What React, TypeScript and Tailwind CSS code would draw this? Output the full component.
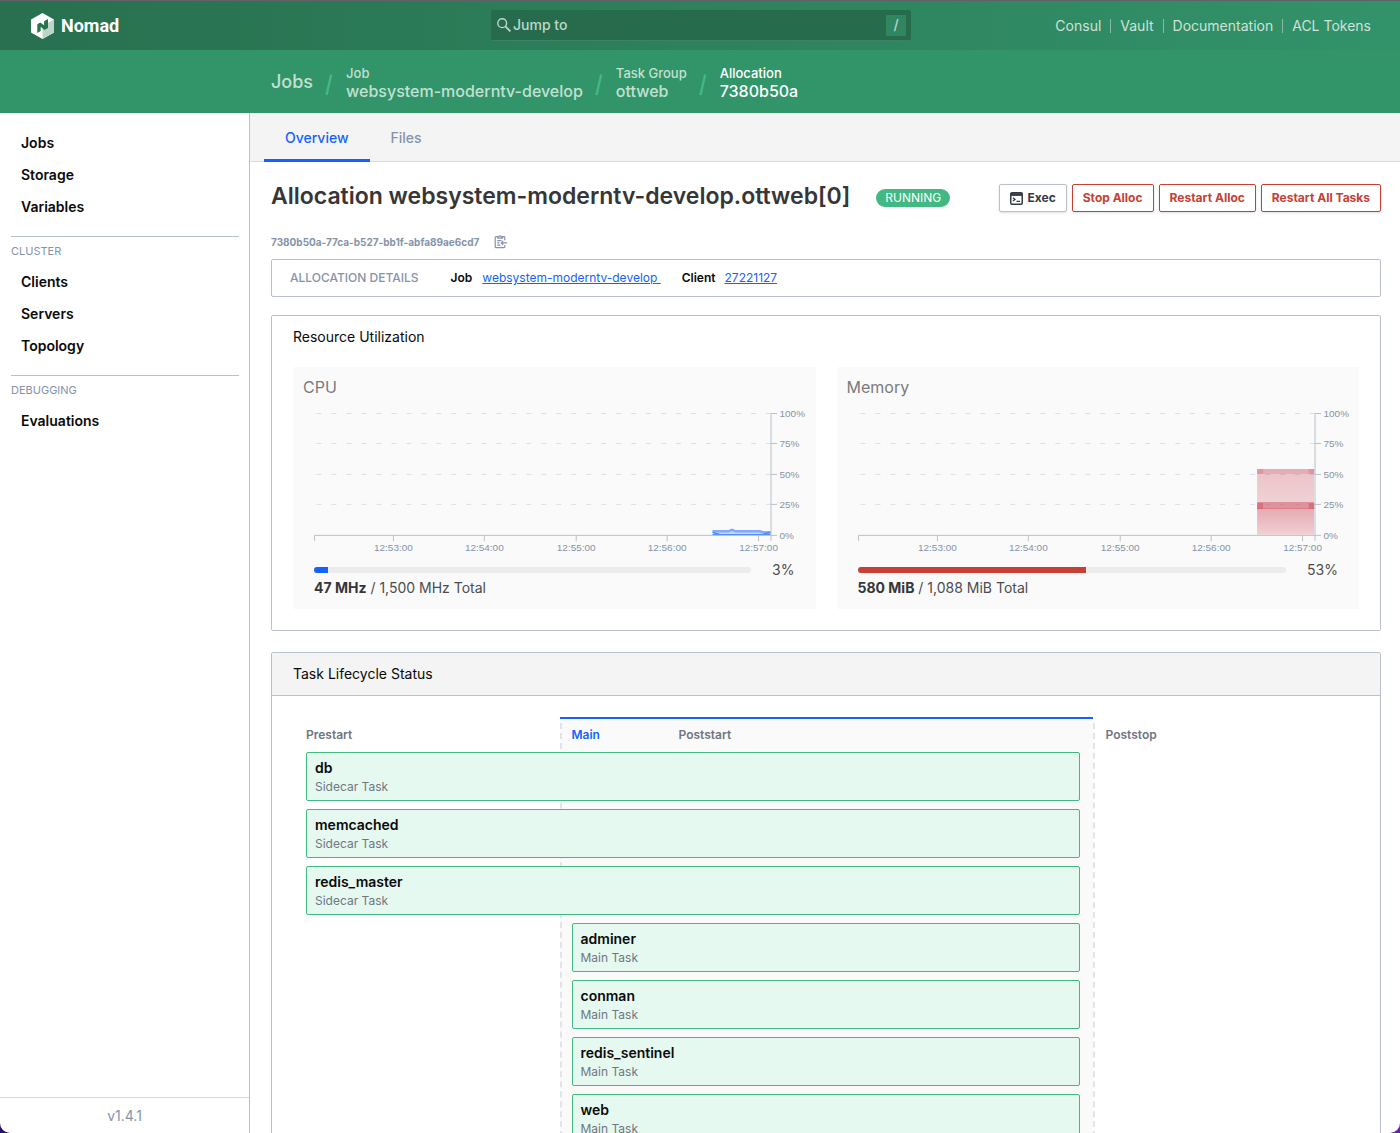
import React from 'react';

const navLinks = ['Consul', 'Vault', 'Documentation', 'ACL Tokens'];

const crumbs = [
  { label: 'Job', value: 'websystem-moderntv-develop' },
  { label: 'Task Group', value: 'ottweb' },
  { label: 'Allocation', value: '7380b50a', current: true },
];

const menu = [
  { title: '', items: ['Jobs', 'Storage', 'Variables'] },
  { title: 'Cluster', items: ['Clients', 'Servers', 'Topology'] },
  { title: 'Debugging', items: ['Evaluations'] },
];

const tasks = [
  { name: 'db', sidecar: true },
  { name: 'memcached', sidecar: true },
  { name: 'redis_master', sidecar: true },
  { name: 'adminer', sidecar: false },
  { name: 'conman', sidecar: false },
  { name: 'redis_sentinel', sidecar: false },
  { name: 'web', sidecar: false },
];

const yTicks = [
  { y: 13.5, label: '100%' },
  { y: 43.5, label: '75%' },
  { y: 74.5, label: '50%' },
  { y: 104.5, label: '25%' },
  { y: 135.5, label: '0%' },
];

const xTicks = [
  { x: 90.5, label: '12:53:00' },
  { x: 181.5, label: '12:54:00' },
  { x: 273.5, label: '12:55:00' },
  { x: 364.5, label: '12:56:00' },
  { x: 456, label: '12:57:00' },
];

function NomadMark() {
  return (
    <svg width="23" height="26" viewBox="0 0 23 26" aria-hidden="true">
      <path d="M11.5 0 23 6.5v13L11.5 26 0 19.5v-13z" fill="#fff" />
      <path d="M23 6.5v13L11.5 26V13z" fill="#bdd5c9" />
      <path d="M6.3 11.2 9.2 9.6l3.9 2.6V8.2L17 6v9l-3.6 2.1-3.7-3.3v4.1l-3.4 2z" fill="#28734f" />
    </svg>
  );
}

function Slash() {
  return (
    <svg width="8" height="22" viewBox="0 0 8 22" className="shrink-0" aria-hidden="true">
      <path d="M6.2.5 1.5 21" stroke="#42b883" strokeWidth="2.4" />
    </svg>
  );
}

function Header() {
  return (
    <header className="shrink-0 text-white">
      <div className="grid h-[50px] grid-cols-[1fr_420px_1fr] items-center border-t border-[#5f6368] bg-linear-to-r from-[#28704f] to-[#32936a] pr-[29px] pl-[31px]">
        <a href="#" className="flex items-center gap-[7px] font-['Roboto',sans-serif] text-lg font-bold">
          <NomadMark />
          Nomad
        </a>
        <button className="flex h-[31px] items-center rounded-xs border-b border-[#3b8462] bg-[#266c4c] pr-[5px] pl-1.5 text-sm font-medium text-[#bdd8cb]">
          <svg width="14" height="14" viewBox="0 0 14 14" fill="none" stroke="currentColor" strokeWidth="1.4" className="mr-0.5" aria-hidden="true">
            <circle cx="5.2" cy="5.2" r="4.4" />
            <path d="m8.4 8.4 5 5" strokeWidth="1.8" />
          </svg>
          Jump to
          <kbd className="ml-auto flex h-[21px] w-5 items-center justify-center bg-[#2f8660] font-['Inter',sans-serif]">/</kbd>
        </button>
        <nav className="flex items-center justify-end text-sm text-[#cce3d8]">
          {navLinks.map((link, i) => (
            <a
              key={link}
              href="#"
              className={i === 0 ? 'leading-[14px]' : 'ml-[9px] border-l border-[#84bda4] pl-[9px] leading-[14px]'}
            >
              {link}
            </a>
          ))}
        </nav>
      </div>
      <nav className="flex h-[63px] items-center bg-[#329469] pl-[271px] text-[#c3e0d3]" aria-label="Breadcrumb">
        <a href="#" className="text-lg font-medium">Jobs</a>
        {crumbs.map((crumb) => (
          <React.Fragment key={crumb.label}>
            <div className="mr-[13px] ml-3 pt-1.5">
              <Slash />
            </div>
            <a href="#" className={crumb.current ? 'pt-0.5 font-medium text-white' : 'pt-0.5 font-medium'}>
              <div className="text-[13px] leading-[17px]">{crumb.label}</div>
              <div className="text-base leading-[18px]">{crumb.value}</div>
            </a>
          </React.Fragment>
        ))}
      </nav>
    </header>
  );
}

function Sidebar() {
  return (
    <aside className="flex w-[250px] shrink-0 flex-col border-r border-[#bac1cc]">
      <div className="flex-1 pt-[14px] pr-2.5 pl-[11px]">
        {menu.map((group) => (
          <div key={group.items[0]} className="mb-[13px]">
            {group.title && (
              <p className="border-t border-[#bac1cc] pt-1.5 pb-[7px] text-[11px] leading-4 text-[#8693a9] uppercase">
                {group.title}
              </p>
            )}
            <ul>
              {group.items.map((item) => (
                <li key={item}>
                  <a href="#" className="flex h-8 items-center px-2.5 text-sm font-semibold text-[#0a0a0a]">
                    {item}
                  </a>
                </li>
              ))}
            </ul>
          </div>
        ))}
      </div>
      <footer className="border-t border-[#d5d9e3] pt-[7px] pb-1.5 text-center text-sm leading-[22px] text-[#8693a9]">
        v1.4.1
      </footer>
    </aside>
  );
}

function ChartAxes() {
  return (
    <g fontFamily="'Liberation Sans', Arial, sans-serif" fontSize="10" fill="#8693a9">
      <path d="M11.5 141v-5.5h457V141M468.5 135.5v-122" fill="none" stroke="#bac1cc" />
      {yTicks.map((tick) => (
        <g key={tick.label}>
          <path d={`M468.5 ${tick.y}h6`} stroke="#bac1cc" />
          <text x="477" y={tick.y + 3.5}>{tick.label}</text>
        </g>
      ))}
      {xTicks.map((tick) => (
        <g key={tick.label}>
          <path d={`M${tick.x} 135.5v6`} stroke="#bac1cc" />
          <text x={tick.x} y="151" textAnchor="middle">{tick.label}</text>
        </g>
      ))}
    </g>
  );
}

function Gridlines() {
  return (
    <g stroke="#d9dfe8" strokeDasharray="5 10">
      {yTicks.slice(0, 4).map((tick) => (
        <path key={tick.y} d={`M13.5 ${tick.y}h455`} />
      ))}
    </g>
  );
}

function CpuSeries() {
  return (
    <g>
      <path d="M410 130.5h15l4-1.5 4 1.5h25l4 1h6v4h-58z" fill="#c3d9ff" />
      <path d="M410 131.5h16l3.5-1.5 3.5 1.5h24l4 1h7" fill="none" stroke="#7faaff" strokeWidth="2.5" />
      <path d="M410 134.8h58M410 132.5l7 2M468 132.5l-8 2" fill="none" stroke="#4a87fb" strokeWidth="1.2" />
    </g>
  );
}

function MemorySeries() {
  return (
    <g>
      <defs>
        <linearGradient id="memory-fill" x1="0" y1="0" x2="0" y2="1">
          <stop offset="0" stopColor="#c73445" stopOpacity="0.28" />
          <stop offset="1" stopColor="#c73445" stopOpacity="0.14" />
        </linearGradient>
        <linearGradient id="memory-fill-deep" x1="0" y1="0" x2="0" y2="1">
          <stop offset="0" stopColor="#c73445" stopOpacity="0.26" />
          <stop offset="1" stopColor="#c73445" stopOpacity="0.08" />
        </linearGradient>
      </defs>
      <path d="M410.5 69h57v66h-57z" fill="url(#memory-fill)" />
      <path d="M410.5 108h57v27h-57z" fill="url(#memory-fill-deep)" />
      <path d="M410.5 69h57v5h-57z" fill="#d98391" fillOpacity="0.35" />
      <path d="M410.5 69h6v5h-6zM462 69h6v5h-6z" fill="#dc808b" fillOpacity="0.5" />
      <path d="M410.5 102h57v7h-57z" fill="#cf5264" fillOpacity="0.5" />
      <path d="M410.5 103h6v6h-6zM462 103h6v6h-6z" fill="#cc4455" fillOpacity="0.4" />
    </g>
  );
}

type MetricProps = {
  title: string;
  used: string;
  total: string;
  percent: number;
  ratio: number;
  barClass: string;
  children: React.ReactNode;
};

function Metric({ title, used, total, percent, ratio, barClass, children }: MetricProps) {
  return (
    <div className="min-w-0 flex-1 rounded-xs bg-[#fafafa] px-2.5 pb-[13px] text-[#4c4c4e]">
      <h3 className="h-[33px] pt-2 text-base leading-6 text-[#7b7b7d]">{title}</h3>
      <svg viewBox="0 0 503 156" className="block w-full" role="img" aria-label={`${title} utilization`}>
        <Gridlines />
        {children}
        <ChartAxes />
      </svg>
      <div className="px-[11px]">
        <div className="mt-1 flex h-5 items-center">
          <div className="h-1.5 flex-1 overflow-hidden rounded-full bg-[#ececec]">
            <div className={`h-full ${barClass}`} style={{ width: `${ratio}%` }} />
          </div>
          <span className="ml-[21px] text-sm">{percent}%</span>
        </div>
        <p className="text-sm leading-4">
          <strong className="font-bold text-[#363638]">{used}</strong> / {total} Total
        </p>
      </div>
    </div>
  );
}

function ExecIcon() {
  return (
    <svg width="13" height="13" viewBox="0 0 13 13" fill="none" stroke="#363a45" aria-hidden="true">
      <rect x="0.75" y="0.75" width="11.5" height="11.5" rx="1.2" strokeWidth="1.5" />
      <path d="M.5 2.5h12" strokeWidth="2.8" />
      <path d="m3 5.8 2 1.6-2 1.6M6.5 9.3H10" strokeWidth="1.3" />
    </svg>
  );
}

function CopyIcon() {
  return (
    <svg width="14" height="14" viewBox="0 0 14 14" fill="none" stroke="#8693a9" strokeWidth="1.2" aria-hidden="true">
      <path d="M3.5 1.7H2a.8.8 0 0 0-.8.8v9.4a.8.8 0 0 0 .8.8h8a.8.8 0 0 0 .8-.8V10M8.8 1.7H10a.8.8 0 0 1 .8.8v2.7" />
      <path d="M3.8 3.2V1.6h1.1a1.2 1.2 0 0 1 2.3 0h1.3v1.6z" />
      <path d="M3.2 5.7h4.3M3.2 7.9h2.2M3.2 10.2h3.2" />
      <path d="M13.2 7.9H7.3M9.3 5.9l-2 2 2 2" />
    </svg>
  );
}

function Lifecycle() {
  return (
    <section className="rounded-xs border border-[#bac1cc]">
      <h2 className="border-b border-[#bac1cc] bg-[#f4f4f4] px-[21px] text-sm leading-[42px] text-[#0a0a0a]">
        Task Lifecycle Status
      </h2>
      <div className="grid p-[21px] text-xs font-semibold text-[#6f7682]">
        {/* phase columns sit behind the task rows in the same grid cell */}
        <div className="col-start-1 row-start-1 grid grid-cols-4">
          <div className="mt-0.5 px-[13px] pt-2">Prestart</div>
          <div className="col-span-2 border-t-2 border-[#1563ff] bg-[#fafafa]">
            <div className="mt-1 -mr-0.5 grid h-full grid-cols-[107px_1fr] border-x-2 border-dashed border-[#e2e4ea] px-2.5 pt-1">
              <span className="text-[#1563ff]">Main</span>
              <span>Poststart</span>
            </div>
          </div>
          <div className="mt-0.5 px-[13px] pt-2">Poststop</div>
        </div>
        <div className="col-start-1 row-start-1 grid auto-rows-[49px] grid-cols-4 gap-y-2 pt-[35px]">
          {tasks.map((task) => (
            <a
              key={task.name}
              href="#"
              className={`mr-[13px] rounded-xs border border-[#42b883] bg-[#e6f9f0] px-2 pt-1.5 ${
                task.sidecar ? 'col-span-3 col-start-1 ml-[13px]' : 'col-span-2 col-start-2 ml-3'
              }`}
            >
              <div className="text-sm leading-[18px] font-semibold text-[#0a0a0a]">{task.name}</div>
              <div className="text-xs leading-5 font-normal">{task.sidecar ? 'Sidecar Task' : 'Main Task'}</div>
            </a>
          ))}
        </div>
      </div>
    </section>
  );
}

function Allocation() {
  return (
    <main className="flex min-w-0 flex-1 flex-col overflow-hidden">
      <nav className="flex h-[49px] shrink-0 border-b border-[#d8dade] bg-[#f4f4f4] pl-3.5 text-sm font-medium">
        <a href="#" className="-mb-px flex items-center border-b-3 border-[#1563ff] px-[21px] pt-1 text-[#1563ff]">Overview</a>
        <a href="#" className="flex items-center px-[21px] pt-0.5 text-[#8693a9]">Files</a>
      </nav>
      <div className="flex-1 overflow-hidden pt-[22px] pr-[19px] pl-[21px]">
        <div className="flex items-center">
          <h1 className="pb-1 text-[23px] leading-6 font-semibold text-[#363638]">Allocation websystem-moderntv-develop.ottweb[0]</h1>
          <span className="ml-[26px] rounded-full bg-[#42b883] px-[9px] text-xs leading-[18px] text-white">RUNNING</span>
          <div className="ml-auto flex gap-[5px] text-xs font-bold whitespace-nowrap">
            <button className="flex h-7 items-center gap-[5px] rounded-xs border border-[#bac1cc] px-2.5 text-[#363a45] shadow-sm">
              <ExecIcon />
              Exec
            </button>
            {['Stop Alloc', 'Restart Alloc', 'Restart All Tasks'].map((label) => (
              <button key={label} className="h-7 rounded-xs border border-[#c84034] px-2.5 text-[#c84034] shadow-sm">
                {label}
              </button>
            ))}
          </div>
        </div>

        <div className="mt-5 flex h-5 items-center gap-[15px] text-[10px] font-bold text-[#8693a9]">
          7380b50a-77ca-b527-bb1f-abfa89ae6cd7
          <button aria-label="Copy allocation ID">
            <CopyIcon />
          </button>
        </div>

        <div className="mt-[7px] flex h-[38px] items-center rounded-xs border border-[#bac1cc] px-[18px] text-xs">
          <span className="mr-8 font-medium text-[#8693a9]">ALLOCATION DETAILS</span>
          <span className="mr-2.5 font-semibold text-[#0a0a0a]">Job</span>
          <a href="#" className="mr-[21px] whitespace-pre text-[#1563ff] underline">{'websystem-moderntv-develop '}</a>
          <span className="mr-[9px] font-semibold text-[#0a0a0a]">Client</span>
          <a href="#" className="text-[#1563ff] underline">27221127</a>
        </div>

        <section className="mt-[18px] mb-[21px] rounded-xs border border-[#bac1cc] px-[21px] pb-[21px]">
          <h2 className="pb-[9px] text-sm leading-[42px] text-[#0a0a0a]">Resource Utilization</h2>
          <div className="flex gap-[21px]">
            <Metric title="CPU" used="47 MHz" total="1,500 MHz" percent={3} ratio={3.13} barClass="bg-[#1563ff]">
              <CpuSeries />
            </Metric>
            <Metric title="Memory" used="580 MiB" total="1,088 MiB" percent={53} ratio={53.3} barClass="bg-[#c84034]">
              <MemorySeries />
            </Metric>
          </div>
        </section>

        <Lifecycle />
      </div>
    </main>
  );
}

export default function App() {
  return (
    <div className="h-screen bg-linear-to-r from-[#25106e] to-[#6420ae] font-['Inter',sans-serif]">
      <div className="flex h-full flex-col overflow-hidden rounded-b-[10px] bg-white">
        <Header />
        <div className="flex min-h-0 flex-1">
          <Sidebar />
          <Allocation />
        </div>
      </div>
    </div>
  );
}
